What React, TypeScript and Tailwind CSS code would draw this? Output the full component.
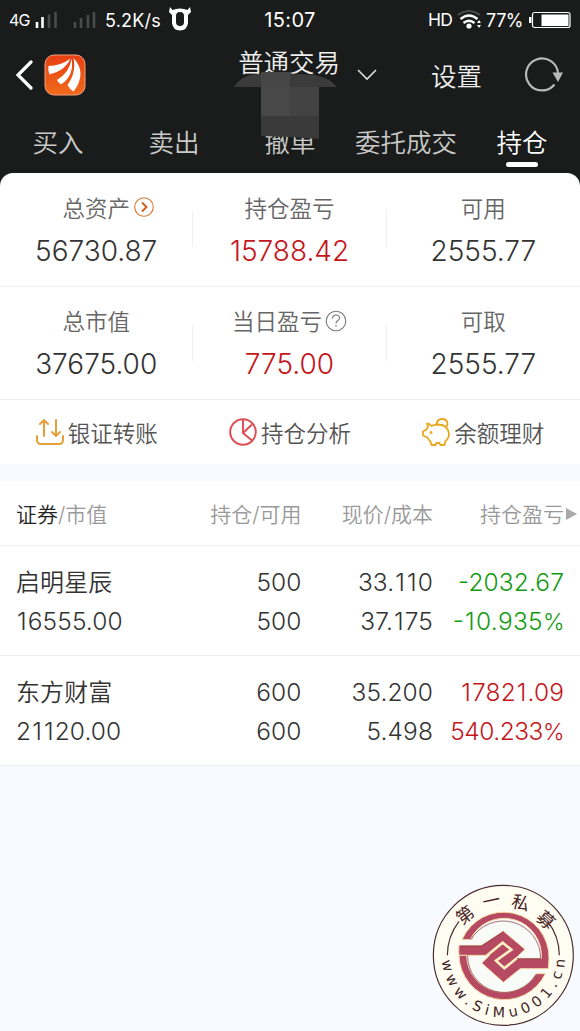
import React, { useState } from 'react'

type Stat = {
  label: string;
  value: string;
  red?: boolean;
  icon?: 'more' | 'help';
}

type Holding = {
  name: string;
  marketValue: string;
  amount: string;
  available: string;
  price: string;
  cost: string;
  profit: string;
  percent: string;
  up: boolean;
}

const tabs = ['买入', '卖出', '撤单', '委托成交', '持仓']

const stats: Stat[][] = [
  [
    { label: '总资产', value: '56730.87', icon: 'more' },
    { label: '持仓盈亏', value: '15788.42', red: true },
    { label: '可用', value: '2555.77' },
  ],
  [
    { label: '总市值', value: '37675.00' },
    { label: '当日盈亏', value: '775.00', red: true, icon: 'help' },
    { label: '可取', value: '2555.77' },
  ],
]

const holdings: Holding[] = [
  { name: '启明星辰', marketValue: '16555.00', amount: '500', available: '500', price: '33.110', cost: '37.175', profit: '-2032.67', percent: '-10.935%', up: false },
  { name: '东方财富', marketValue: '21120.00', amount: '600', available: '600', price: '35.200', cost: '5.498', profit: '17821.09', percent: '540.233%', up: true },
]

function StatusBar() {
  return (
    <div className="flex h-10 items-center justify-between pl-[9px] pr-[9px] font-normal text-white">
      <div className="flex w-[200px] items-center">
        <span className="w-[22px] text-[16px] tracking-[-0.8px]">4G</span>
        <svg width="62" height="20" viewBox="0 0 62 20" className="ml-[3px]">
          <path d="M3 12v6M8.500 7v11" stroke="#fff" strokeWidth="2.600" />
          <path d="M15 4.500v13.500M21.500 2v16" stroke="#4a4c4a" strokeWidth="2.600" />
          <path d="M41 12v6M47 8v10M54 5v13M60 2v16" stroke="#4a4c4a" strokeWidth="2.600" />
        </svg>
        <span className="ml-[9px] w-[56px] whitespace-nowrap text-[18px] tracking-[0.2px]">5.2K/s</span>
        <svg width="24" height="24" viewBox="0 0 24 24" className="ml-[7px] mt-[-2px] shrink-0">
          <path d="M2 0l2.500 3q7.500-3 15 0l2.500-3 1 5-3 3v8q-1 7.500-8 7.500t-8-7.500v-8l-3-3z" fill="#fff" />
          <rect x="8" y="5" width="8" height="14" rx="4" fill="#191c1a" />
        </svg>
      </div>
      <span className="w-[60px] text-center text-[20px] tracking-[0.4px]">15:07</span>
      <div className="flex w-[200px] items-center justify-end">
        <span className="text-[17.500px] tracking-[-0.8px]">HD</span>
        <svg width="25" height="20" viewBox="0 0 25 20" className="ml-[5px]" fill="none">
          <path d="M1 5q11-8 22 0" stroke="#4a4c4a" strokeWidth="2" />
          <path d="M3.500 9q8.500-7 17 0M6.500 13q5.500-4.500 11 0" stroke="#fff" strokeWidth="2.300" />
          <circle cx="12" cy="16" r="2.600" fill="#fff" />
          <path d="M20 13l2-3 2 3zM20 15l2 3 2-3z" fill="#fff" />
        </svg>
        <span className="ml-[4px] text-[18px] tracking-[-0.5px]">77%</span>
        <svg width="42" height="18" viewBox="0 0 42 18" className="ml-[6px]">
          <rect x="0" y="6" width="2.500" height="6" fill="#fff" />
          <rect x="3.500" y="1.500" width="37.500" height="15" rx="2" fill="none" stroke="#fff" strokeWidth="1.200" />
          <rect x="12.500" y="3.500" width="27" height="11.500" fill="#fff" />
        </svg>
      </div>
    </div>
  )
}

function Header() {
  return (
    <div className="relative flex h-[70px] items-center">
      <svg width="20" height="30" viewBox="0 0 20 30" className="ml-[15px]" fill="none">
        <path d="M16 2L3 15l13 13" stroke="#fff" strokeWidth="3.200" strokeLinecap="round" />
      </svg>
      <svg width="42" height="42" viewBox="0 0 42 42" className="ml-[9px]">
        <defs>
          <linearGradient id="app" x1="0" y1="0" x2="0" y2="1">
            <stop offset="0" stopColor="#e83f12" />
            <stop offset="1" stopColor="#f06b1c" />
          </linearGradient>
        </defs>
        <rect x="1" y="1" width="40" height="40" rx="9" fill="url(#app)" stroke="#f3a183" />
        <path d="M4.500 12q12 0 22-7.500-5 12-21 16-2-4-1-8.500z" fill="#fff" />
        <path d="M13 26q13-8 14.500-21.500 3 17-10.500 26-3-2-4-4.500z" fill="#fff" />
        <path d="M23.500 31q9-12 6-27 14 15 0 33.500-4-2.500-6-6.500z" fill="#fff" />
      </svg>
      <div className="ml-[151px] flex h-full w-[104px] justify-center pt-[5px] text-[25.500px] leading-9 tracking-[-0.1px] text-[#eee]">普通交易</div>
      <svg width="22" height="14" viewBox="0 0 22 14" className="ml-[15px]" fill="none">
        <path d="M2 2l9 9 9-9" stroke="#ddd" strokeWidth="1.600" />
      </svg>
      <span className="ml-[53px] mt-[4px] text-[25.500px] text-[#eee]">设置</span>
      <svg width="40" height="38" viewBox="0 0 40 38" className="ml-[42px] mt-[-2px]" fill="none">
        <path d="M30.500 29.500A16 16 0 1 1 34 18" stroke="#b9bab9" strokeWidth="2.200" />
        <path d="M28.500 17.500h10.500L34 27z" fill="#b9bab9" />
      </svg>
      {/* account name is masked out */}
      <svg width="104" height="67" viewBox="0 0 104 67" className="absolute left-[233px] top-[32px] z-10">
        <path d="M1 15Q9 3 22 2L50 1 82 3Q97 6 104 15z" fill="#3a3b3a" />
        <rect x="28" y="0" width="29" height="15" fill="#464646" />
        <rect x="28" y="15" width="58" height="29" fill="#474847" />
        <rect x="57" y="15" width="29" height="29" fill="#424342" />
        <path d="M28 44h58v23l-30-2-28-1z" fill="#393a39" />
      </svg>
    </div>
  )
}

function StatCell({ label, value, red, icon }: Stat) {
  return (
    <div className="flex flex-col items-center pt-[19.500px]">
      <div className="relative flex items-center text-[22.500px] leading-8 text-[#666]">
        {label}
        {icon == 'more' && (
          <svg width="22" height="22" viewBox="0 0 22 22" className="absolute left-full ml-[3px] mt-[-3px]" fill="none">
            <circle cx="11" cy="11" r="9.300" stroke="#d9762f" strokeWidth="1.100" />
            <path d="M9 6.500l4.500 4.500L9 15.500" stroke="#d0601f" strokeWidth="2" />
          </svg>
        )}
        {icon == 'help' && (
          <svg width="22" height="22" viewBox="0 0 22 22" className="ml-[3px] mt-[-3px]" fill="none" stroke="#777" strokeWidth="1.100">
            <circle cx="11" cy="11" r="9.800" />
            <path d="M7.500 8.500q0-3.500 3.500-3.500t3.500 3q0 1.700-1.900 2.700-1.600.8-1.600 2.800M11 15v1.700" />
          </svg>
        )}
      </div>
      <div className={`mt-[9px] text-[28px] leading-[34px] ${red ? 'text-[#c4161c]' : 'text-[#333]'}`}>{value}</div>
    </div>
  )
}

function Actions() {
  return (
    <div className="grid h-[64px] grid-cols-3 text-[22.500px] text-[#555]">
      <div className="flex items-center justify-center">
        <svg width="28" height="28" viewBox="0 0 28 28" className="mr-[4px]" fill="none" stroke="#e5a03b" strokeWidth="2" strokeLinecap="round" strokeLinejoin="round">
          <path d="M1 18v4q0 4 4 4h18q4 0 4-4v-4M8 18V2M4 6l4-4 4 4M20 2v16M16 14l4 4 4-4" />
        </svg>
        <span className="pt-[3px]">银证转账</span>
      </div>
      <div className="flex items-center justify-center">
        <svg width="28" height="28" viewBox="0 0 28 28" className="mr-[4px]" fill="none" stroke="#df4f55" strokeWidth="2">
          <circle cx="14" cy="14" r="12.800" />
          <path d="M14 1v14l9 7.500M14 15l9-8.500" />
        </svg>
        <span className="pt-[3px]">持仓分析</span>
      </div>
      <div className="flex items-center justify-center">
        <svg width="28" height="28" viewBox="0 0 28 28" className="mr-[4px]" fill="none" stroke="#e8a91f" strokeWidth="1.800" strokeLinejoin="round">
          <path d="M5 5.500q2.500 0 4.500 2.500 3-1.500 7-1.500 9.500.5 10.500 9 0 5-3.500 7.500l-1 4h-4l-1-2h-3l-1 2h-4l-1-3.500q-2-1.500-3-4l-4.500-2v-4l3.500-2 1.500-3z" />
          <path d="M14.500 6.500q.5-5.500 5.500-5.500t5.500 4.500q0 3-2.500 4" />
          <circle cx="9" cy="14.500" r="0.600" fill="#e8a91f" />
        </svg>
        <span className="pt-[3px]">余额理财</span>
      </div>
    </div>
  )
}

// evens out the narrow "1" and the wide "%" of the figures
function Figure({ value }: { value: string }) {
  return (
    <>
      {value.split('').map((c, i) => (
        <span key={i} className={c == '1' ? 'px-[1px]' : c == '%' ? 'text-[23px] tracking-[-0.5px]' : c == '-' ? 'relative top-[-1px]' : ''}>{c}</span>
      ))}
    </>
  )
}

function HoldingRow({ item }: { item: Holding }) {
  const color = item.up ? 'text-[#c4161c]' : 'text-[#129a12]'
  return (
    <div className="grid h-[110px] grid-cols-[141px_144.500px_131.500px_131px] content-center border-b border-[#f0f0f0] pl-4 pt-[4px] text-right text-[24.500px] leading-[39px] tracking-[0.1px] text-[#333]">
      <span className="text-left text-[24px]">{item.name}</span>
      <span>{item.amount}</span>
      <span><Figure value={item.price} /></span>
      <span className={color}><Figure value={item.profit} /></span>
      <span className="text-left"><Figure value={item.marketValue} /></span>
      <span>{item.available}</span>
      <span><Figure value={item.cost} /></span>
      <span className={`${item.up ? 'tracking-[-0.5px]' : 'tracking-[0.3px]'} ${color}`}><Figure value={item.percent} /></span>
    </div>
  )
}

function Seal() {
  return (
    <svg width="155" height="156" viewBox="0 0 465 468" className="absolute left-[425px] top-[875px]">
      <defs>
        <path id="site" d="M51 258A185 185 0 0 0 420 252L420 200" />
      </defs>
      <circle cx="235" cy="241" r="210" fill="#fffdf2" stroke="#4a2a2c" strokeWidth="3.500" />
      <path d="M67 241A168 168 0 0 1 102 139M368 139A168 168 0 0 1 403 241" fill="none" stroke="#4a2a2c" strokeWidth="3.500" />
      <circle cx="237" cy="245" r="134" fill="#f9fbf8" />
      <g fill="#b54a62" stroke="#f6dda6" strokeWidth="3">
        <path d="M111 194A136 136 0 0 1 372 250L370 281H286L235 322 170 264 194 241H102A136 136 0 0 1 102 211H169L235 168 300 223 272 250H349A112 112 0 0 0 136 194z" />
        <path d="M102 241A136 136 0 0 0 361 296H334A112 112 0 0 1 125 241z" />
      </g>
      <path d="M347 250A112 112 0 0 0 138 194" fill="none" stroke="#7d2940" strokeWidth="2" />
      <path d="M104 213H170L235 170M128 241A110 110 0 0 0 333 298M272 251H347" fill="none" stroke="#7d2940" strokeWidth="2" />
      <path d="M184 243L233 203 259 224 213 257 238 280 275 250" fill="none" stroke="#fff0c4" strokeWidth="8" />
      <g fill="#4a2425" fontSize="53" textAnchor="middle" className="font-['Noto_Sans_CJK_SC',sans-serif] font-normal">
        <text transform="translate(132 135) rotate(-38)">第</text>
        <text transform="translate(203 96) rotate(-12)">一</text>
        <text transform="translate(282 102) rotate(14)">私</text>
        <text transform="translate(350 149) rotate(42)">募</text>
      </g>
      <text fill="#3f2526" fontSize="43" letterSpacing="14.500" className="font-['DejaVu_Sans',sans-serif] font-normal">
        <textPath href="#site">www.SiMu001.cn</textPath>
      </text>
    </svg>
  )
}

function App() {
  const [active, setActive] = useState(4)
  return (
    <div className="relative h-[1031px] w-[580px] overflow-hidden bg-[#f7faff] font-['Inter','Noto_Sans_CJK_SC',sans-serif] font-[350]">
      <div className="bg-[#191c1a]">
        <StatusBar />
        <Header />
        <div className="grid h-[63px] grid-cols-5 text-[25.500px] leading-9">
          {tabs.map((tab, i) => (
            <button key={tab} onClick={() => setActive(i)} className={`flex flex-col items-center whitespace-nowrap pt-[15px] ${i == active ? 'text-white' : 'text-[#c8c9c8]'}`}>
              {tab}
              {i == active && <span className="mt-px h-[5px] w-8 rounded-full bg-white" />}
            </button>
          ))}
        </div>
        <div className="rounded-t-[13px] bg-white">
          {stats.map((row, i) => (
            <div key={i} className="grid h-[113.500px] grid-cols-3 border-b border-[#f0f0f0]">
              {row.map((s, j) => (
                <div key={s.label} className="flex items-center">
                  <div className="h-full flex-1"><StatCell {...s} /></div>
                  {j < 2 && <div className="h-9 w-px bg-[#f0f0f0]" />}
                </div>
              ))}
            </div>
          ))}
          <Actions />
        </div>
      </div>
      <div className="mt-[17px] bg-white">
        <div className="grid h-[65px] grid-cols-[141px_144.500px_131.500px_131px] items-center border-b border-[#f0f0f0] pl-4 pt-[3px] text-right text-[21px] text-[#999]">
          <span className="text-left"><span className="text-[#222]">证券</span>/市值</span>
          <span>持仓/可用</span>
          <span>现价/成本</span>
          <span className="relative">
            持仓盈亏
            <svg width="11" height="12" viewBox="0 0 11 12" className="absolute left-full top-[9px] ml-[2px]">
              <path d="M0 0l11 6-11 6z" fill="#aaa" />
            </svg>
          </span>
        </div>
        {holdings.map((h) => <HoldingRow key={h.name} item={h} />)}
      </div>
      <Seal />
    </div>
  )
}

export default App
